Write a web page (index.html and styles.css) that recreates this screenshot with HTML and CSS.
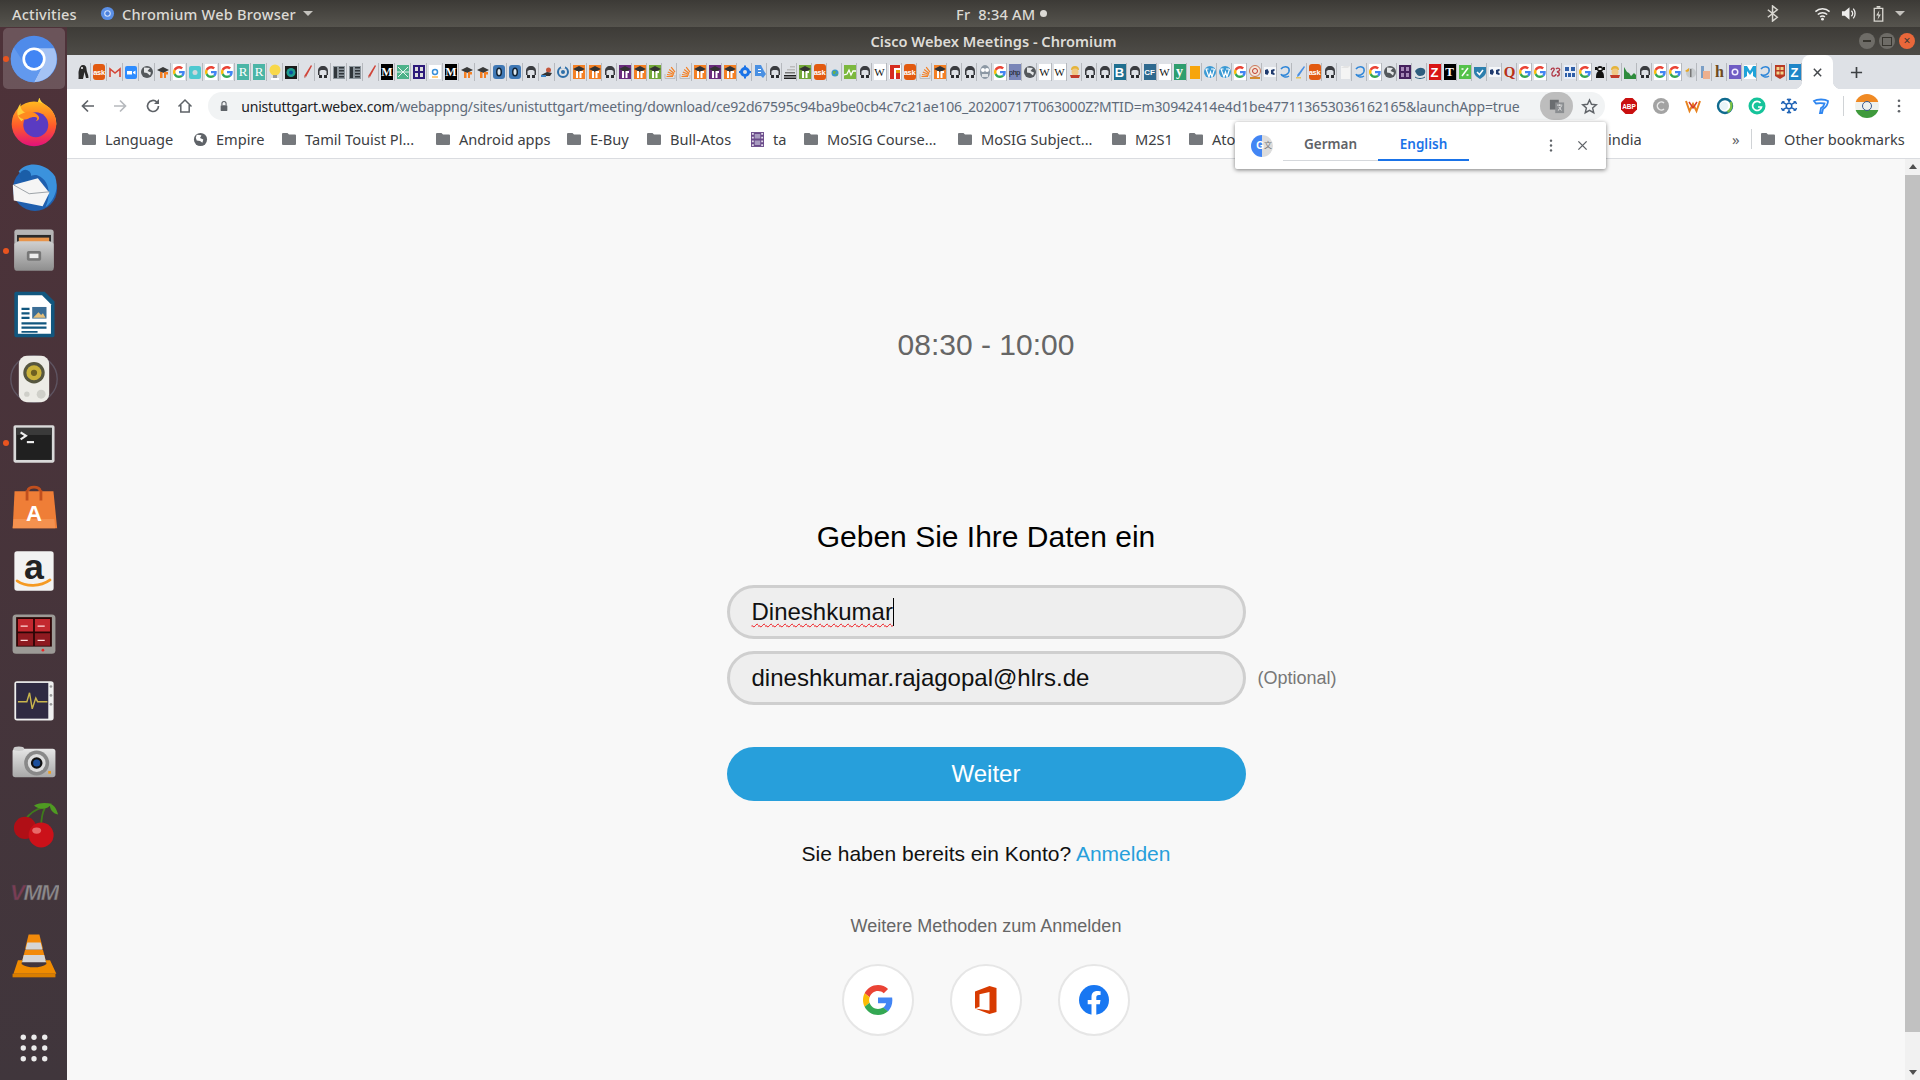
FILE: index.html
```html
<!DOCTYPE html>
<html lang="de">
<head>
<meta charset="utf-8">
<title>Cisco Webex Meetings - Chromium</title>
<link rel="stylesheet" href="styles.css">
</head>
<body>
<svg class="defs" aria-hidden="true">
  <symbol id="g" viewBox="0 0 48 48">
    <path fill="#EA4335" d="M24 9.5c3.54 0 6.71 1.22 9.21 3.6l6.85-6.85C35.9 2.38 30.47 0 24 0 14.62 0 6.51 5.38 2.56 13.22l7.98 6.19C12.43 13.72 17.74 9.5 24 9.5z"/>
    <path fill="#4285F4" d="M46.98 24.55c0-1.57-.15-3.09-.38-4.55H24v9.02h12.94c-.58 2.96-2.26 5.48-4.78 7.18l7.73 6c4.51-4.18 7.09-10.36 7.09-17.65z"/>
    <path fill="#FBBC05" d="M10.53 28.59c-.48-1.45-.76-2.99-.76-4.59s.27-3.14.76-4.59l-7.98-6.19C.92 16.46 0 20.12 0 24c0 3.88.92 7.54 2.56 10.78l7.97-6.19z"/>
    <path fill="#34A853" d="M24 48c6.48 0 11.93-2.13 15.89-5.81l-7.73-6c-2.15 1.45-4.92 2.3-8.16 2.3-6.26 0-11.57-4.22-13.47-9.91l-7.98 6.19C6.51 42.62 14.62 48 24 48z"/>
  </symbol>
  <symbol id="ghost" viewBox="0 0 12 16"><path fill="#3a3c40" d="M1 7c0-3 2-5 5-5s5 2 5 5v4h-1.500V7.500c0-1-1-1.500-3.500-1.500s-3.500.5-3.500 1.500V11H1z"/><path fill="#2b2d30" d="M2 11h3v3H2zM7 11h3v3H7z"/></symbol>
  <symbol id="peng" viewBox="0 0 12 16"><path fill="#2a2a2a" d="M6 1c2.500 0 3.500 2 3.500 4 0 3 2 5 2 9H9L7.500 8 6 15H1.500C2 10 1 9 2 6 2.500 3 4 1 6 1z"/><circle cx="5" cy="4" r="1" fill="#fff"/></symbol>
  <symbol id="gm" viewBox="0 0 12 16"><path fill="#e3e3e3" d="M0 4h12v9H0z"/><path fill="none" stroke="#d44638" stroke-width="1.600" d="M1 13V5l5 4 5-4v8"/></symbol>
  <symbol id="zm" viewBox="0 0 12 16"><rect y="2" width="12" height="13" rx="2" fill="#2d8cff"/><path fill="#fff" d="M2 7h5v3.500H2zM8 8l2.500-1.500v4L8 9z"/></symbol>
  <symbol id="d3" viewBox="0 0 12 16"><circle cx="6" cy="8" r="6" fill="#54585c"/><path fill="#e4e6e8" d="M3 3.500l6 .5-2.500 3 3.500 1.500-1 3-3-2.500-3-.5z"/></symbol>
  <symbol id="hat" viewBox="0 0 12 16"><path fill="#3a3a3a" d="M0 6l6-3 6 3-6 3z"/><path fill="#f48024" d="M3 8h2.500v6H3zM7 8h4v2.500H9V14H7z"/></symbol>
  <symbol id="box" viewBox="0 0 12 16"><rect y="1" width="12" height="14" fill="currentColor"/><path fill="#333" d="M0 5l6-3 6 3-6 3z"/><path fill="#fff" d="M3 7h2v7H3zM6.500 7h3.500v2H8.500v5h-2z"/></symbol>
  <symbol id="teal" viewBox="0 0 12 16"><rect y="2" width="12" height="13" rx="2" fill="#4ec9d0"/><circle cx="6" cy="8.500" r="2.500" fill="#cfd8dc"/></symbol>
  <symbol id="bulb" viewBox="0 0 12 16"><circle cx="6" cy="6" r="5.500" fill="#f8d84a"/><path fill="#999" d="M4 11h4v3H4z"/><path fill="#fff" d="M2 14h8v2H2z"/></symbol>
  <symbol id="eye" viewBox="0 0 12 16"><rect y="2" width="12" height="13" fill="#1b1b1b"/><circle cx="6" cy="8.500" r="4.500" fill="#1e9c8e"/><circle cx="6" cy="8.500" r="2" fill="#0a4fa0"/></symbol>
  <symbol id="pen" viewBox="0 0 12 16"><path fill="#d0453a" d="M10 1l1 1-6 11-2 1 .5-2.500z"/><path fill="#bbb" d="M4 12l1 1-2 1.500z"/></symbol>
  <symbol id="bpen" viewBox="0 0 12 16"><path fill="#4a90e2" d="M10 2l1 1-6 9-2 1 .5-2.500z"/><path fill="#e6c35c" d="M2 13h5v1.500H2z"/></symbol>
  <symbol id="grid" viewBox="0 0 12 16"><rect x="0" y="2" width="12" height="13" fill="#8e979e"/><path fill="#30363b" d="M6 3h5v1.500H6zM6 6h5v1.500H6zM6 9h5v1.500H6zM6 12h5v1.500H6zM1 3h3v11H1z"/></symbol>
  <symbol id="gx" viewBox="0 0 12 16"><rect y="1" width="12" height="14" fill="#4db28a"/><path fill="none" stroke="#e8f5ef" d="M1 3l10 10M11 3L1 13M0 8h12"/></symbol>
  <symbol id="d2" viewBox="0 0 12 16"><rect y="1" width="12" height="14" fill="#2d1a7b"/><path fill="#ddd" d="M2 3h3v4H2zM7 3h3v4H7zM2 9h3v4H2zM7 9h3v4H7z"/></symbol>
  <symbol id="amz" viewBox="0 0 12 16"><rect y="1" width="12" height="14" fill="#fff"/><circle cx="6" cy="8" r="2.500" fill="none" stroke="#3a8fd8" stroke-width="1.500"/><path stroke="#f90" fill="none" d="M3 13h6"/></symbol>
  <symbol id="bz" viewBox="0 0 12 16"><rect y="1" width="12" height="14" rx="3" fill="#3f78b5"/><ellipse cx="6" cy="8" rx="3" ry="4.500" fill="#123"/><ellipse cx="6" cy="8" rx="1.500" ry="3" fill="#dfe8ee"/></symbol>
  <symbol id="pers" viewBox="0 0 12 16"><circle cx="7.500" cy="6" r="2.500" fill="#c4553b"/><path fill="#333" d="M0 11l6-3 5 1-2 3H1z"/><path fill="#3a82c4" d="M0 11h5v2H0z"/></symbol>
  <symbol id="ring" viewBox="0 0 12 16"><circle cx="6" cy="8" r="5" fill="none" stroke="#2f6fa8" stroke-width="2"/><circle cx="6" cy="8" r="2" fill="#2f6fa8"/><path fill="#dee1e6" d="M4 1h4v3H4z"/></symbol>
  <symbol id="so" viewBox="0 0 12 16"><path fill="none" stroke="#f48024" stroke-width="1.200" d="M2.500 12.500h6.500M3 10.500l6.500 1M3.800 8l6 2.500M5.200 5.500l5 4M7.200 3.200l3.800 5"/><path fill="none" stroke="#bdbdbd" d="M1 10v4.500h10V11"/></symbol>
  <symbol id="gear" viewBox="0 0 12 16"><circle cx="6" cy="8" r="3.500" fill="none" stroke="#1a73e8" stroke-width="3"/><path stroke="#1a73e8" stroke-width="2" d="M6 1.500v2M6 12.500v2M0 8h2M10 8h2"/></symbol>
  <symbol id="bs" viewBox="0 0 12 16"><path fill="#4a90e2" d="M1 1h6l3 6 2 3-3 4-2-2H1z"/><path fill="#fff" d="M4 5h3v1H4zM4 8h3v1H4z"/></symbol>
  <symbol id="lines" viewBox="0 0 12 16"><path fill="#bbb" d="M6 2h5v1.500H6zM3 5h8v1.500H3z"/><path fill="#777" d="M1 8h10v1.500H1z"/><path fill="#222" d="M0 11h12v1.500H0zM0 13.500h12V15H0z"/></symbol>
  <symbol id="globe" viewBox="0 0 12 16"><circle cx="6" cy="9" r="3.500" fill="#3a98c8"/><path fill="#6ab04c" d="M4 7h3l-1 3H4zM7 10h2l-1 2z"/></symbol>
  <symbol id="wave" viewBox="0 0 12 16"><rect y="1" width="12" height="14" fill="#7cb83e"/><path fill="none" stroke="#fff" stroke-width="1.300" d="M0 11l3-1 2-4 2 5 2-4h3"/></symbol>
  <symbol id="red" viewBox="0 0 12 16"><rect y="1" width="12" height="14" fill="#fff"/><path fill="#d62d20" d="M1 1h10v3H1zM1 4h4v11H1z"/><path fill="#e3a008" d="M7 6h4v3H7z"/><path fill="#d62d20" d="M7 9h4v6H7z"/></symbol>
  <symbol id="owl" viewBox="0 0 12 16"><ellipse cx="6" cy="8" rx="5" ry="7" fill="#8c98a4"/><circle cx="4" cy="6" r="2" fill="#fff"/><circle cx="8" cy="6" r="2" fill="#fff"/><path fill="#dfe3e6" d="M3 10h6v3H3z"/></symbol>
  <symbol id="face" viewBox="0 0 12 16"><path fill="#e5b43a" d="M2 6a4 4 0 0 1 8 0z"/><circle cx="6" cy="8" r="3.500" fill="#f0c886"/><path fill="#c23a2a" d="M1 11h10l-1 3H2z"/></symbol>
  <symbol id="yb" viewBox="0 0 12 16"><rect x="1" y="2" width="10" height="13" fill="#f7a50d"/></symbol>
  <symbol id="wp" viewBox="0 0 12 16"><circle cx="6" cy="8" r="6" fill="#3b9ad4"/><path fill="none" stroke="#fff" stroke-width="1.200" d="M2 5l3 8 1.500-5L8 13l2.500-8M1.500 5h3M7 5h3"/></symbol>
  <symbol id="seal" viewBox="0 0 12 16"><circle cx="6" cy="7" r="5.500" fill="#f3e5d8" stroke="#c9785a"/><circle cx="6" cy="7" r="2.500" fill="none" stroke="#c0392b"/><path fill="#d38a2d" d="M1 13h10v2H1z"/></symbol>
  <symbol id="oc" viewBox="0 0 12 16"><rect y="3" width="12" height="10" fill="#f5f7fa"/><path fill="#1f3a6e" d="M1 6l2.500-1L5 8l-1.500 3L1 10zM7 6l3-1 1 1-2 2 2 2-1 1-3-1z"/></symbol>
  <symbol id="sw" viewBox="0 0 12 16"><path fill="none" stroke="#2f86d8" stroke-width="1.500" d="M2 5c2-3 7-3 8 0 1 4-3 7-7 6M10 12c-3 2-7 1-8-2"/></symbol>
  <symbol id="wh" viewBox="0 0 12 16"><rect x="2" y="2" width="9" height="13" fill="#f4f4f4"/><path fill="#e4e4e4" d="M2 4l3-2h6l-2 2z"/></symbol>
  <symbol id="code" viewBox="0 0 12 16"><rect y="1" width="12" height="14" fill="#46215e"/><path fill="#a78ab8" d="M2 3h3v4H2zM7 3h3v4H7zM2 9h3v4H2zM7 9h3v4H7z"/></symbol>
  <symbol id="whale" viewBox="0 0 12 16"><circle cx="6" cy="8" r="6" fill="#dfe3e8"/><path fill="#2f5d7e" d="M1 7c3-4 8-4 10-1 1 3-1 6-5 6-2 0-4-2-5-5z"/><path fill="none" stroke="#2f5d7e" d="M1 13c3 2 7 2 10 0"/></symbol>
  <symbol id="pct" viewBox="0 0 12 16"><rect y="1" width="12" height="14" fill="#55c24a"/><path fill="none" stroke="#fff" stroke-width="1.500" d="M3 12l6-8M2.500 5h2M7.500 11h2"/></symbol>
  <symbol id="shield" viewBox="0 0 12 16"><path fill="#2c7fae" d="M0 3h12v5c0 3-3 5-6 7-3-2-6-4-6-7z"/><path fill="none" stroke="#fff" stroke-width="1.500" d="M3 8l2.500 2.500L9 6"/></symbol>
  <symbol id="curl" viewBox="0 0 12 16"><path fill="none" stroke="#b03a48" stroke-width="1.400" d="M2 6c1-3 4-2 3 0S2 9 3 11s4 1 4-1M7 5c2-2 5 0 3 2l-2 1c3 0 3 4 0 4"/></symbol>
  <symbol id="btxt" viewBox="0 0 12 16"><rect y="1" width="12" height="14" fill="#e8eef8"/><path fill="#2f5fa8" d="M1 3h4v4H1zM7 3h4v4H7zM1 9h2v4H1zM4 9h3v4H4zM8 9h3v4H8z"/></symbol>
  <symbol id="blk" viewBox="0 0 12 16"><circle cx="6" cy="5" r="3" fill="#111"/><path fill="#111" d="M2 14c0-5 1-7 4-7s4 2 4 7z"/><path fill="#eee" d="M4.500 4h3v2h-3z"/><path fill="#111" d="M1 3h2v3H1zM9 3h2v3H9z"/></symbol>
  <symbol id="mtn" viewBox="0 0 12 16"><path fill="#2e8b3d" d="M0 15V3l3 5 2 1 2 3 3-3 2 2v4z"/></symbol>
  <symbol id="kk" viewBox="0 0 12 16"><circle cx="7" cy="9" r="5" fill="#c6cacd"/><path fill="#e9a826" d="M1 7l4-3v3l-2 1z"/><path fill="#777" d="M6 5h1.500v8H6z"/></symbol>
  <symbol id="hh" viewBox="0 0 12 16"><path fill="#7b9fc6" d="M2 2h3v12H2z"/><path fill="#eeb08e" d="M4 7h7v8H4z"/></symbol>
  <symbol id="pc" viewBox="0 0 12 16"><rect y="1" width="12" height="14" fill="#6f5cc4"/><circle cx="6" cy="8" r="3.500" fill="#f1edff"/><circle cx="6" cy="8" r="2" fill="#6f5cc4"/></symbol>
  <symbol id="mm" viewBox="0 0 12 16"><rect y="1" width="12" height="14" fill="#fff"/><path fill="#1fa3d9" d="M0 2l3 0 3 5 3-5h3v12l-3-2V7l-3 4-3-4v5l-3 2z"/></symbol>
  <symbol id="rs" viewBox="0 0 12 16"><path fill="#b83a24" d="M1 1h10v11l-5 3-5-3z"/><path fill="#f1d48a" d="M2.500 3h3v3h-3zM6.500 3h3v3h-3zM2.500 7.500h3v3h-3zM6.500 7.500h3v3h-3z"/></symbol>
  <symbol id="fld" viewBox="0 0 14 12"><path fill="#75787c" d="M1 0h4.500l1.500 1.500h6a1 1 0 0 1 1 1V11a1 1 0 0 1-1 1H1a1 1 0 0 1-1-1V1a1 1 0 0 1 1-1z"/></symbol>
</svg>

<header class="topbar">
  <span class="tb-activities">Activities</span>
  <span class="tb-app">
    <svg class="tb-appicon" viewBox="0 0 16 16"><circle cx="8" cy="8" r="7" fill="#5a8fe6"/><circle cx="8" cy="8" r="3.500" fill="#cfe0fb"/><circle cx="8" cy="8" r="2.300" fill="#4a80dd"/></svg>
    Chromium Web Browser
    <i class="caret"></i>
  </span>
  <span class="tb-clock">Fr&nbsp; 8:34 AM<i class="clockdot"></i></span>
  <span class="tb-tray">
    <svg class="tray-bt" viewBox="0 0 18 18"><path fill="none" stroke="#d8d6d0" stroke-width="1.600" d="M3 5l10 8-5 4V1l5 4L3 13"/></svg>
    <svg class="tray-wifi" viewBox="0 0 18 18"><path fill="none" stroke="#eeedeb" stroke-width="1.600" d="M1.500 7a11 11 0 0 1 15 0M4 10a7.500 7.500 0 0 1 10 0M6.500 12.800a3.500 3.500 0 0 1 5 0"/><circle cx="9" cy="15" r="1.500" fill="#eeedeb"/></svg>
    <svg class="tray-vol" viewBox="0 0 18 18"><path fill="#eeedeb" d="M1 6.500h3L9 2.500v13l-5-4H1z"/><path fill="none" stroke="#eeedeb" stroke-width="1.400" d="M11 6a4 4 0 0 1 0 6M13 3.800a8 8 0 0 1 0 10.400"/></svg>
    <svg class="tray-bat" viewBox="0 0 18 18"><path fill="none" stroke="#d8d6d0" stroke-width="1.400" d="M4.500 3.500h9v13.500h-9z"/><path fill="#d8d6d0" d="M7 1h4v2H7zM10 5.500L6.500 11H9l-1 4.500L11.500 10H9z"/></svg>
    <i class="caret caret-tray"></i>
  </span>
</header>

<div class="desk">
  <nav class="dock">
    <div class="dk dk-active"><i class="run"></i>
      <svg viewBox="0 0 56 56"><circle cx="28" cy="28" r="26" fill="#4f8bea"/><path fill="#a4c2f4" d="M28 16H50.500A26 26 0 0 1 28 54L38.400 34A12 12 0 0 0 28 16Z"/><path fill="#6299ee" d="M38.400 34L28 54A26 26 0 0 1 5.500 15L17.600 34A12 12 0 0 0 38.400 34Z"/><circle cx="28" cy="28" r="13" fill="#fff"/><circle cx="28" cy="28" r="10" fill="#4285f4"/></svg></div>
    <div class="dk">
      <svg viewBox="0 2 56 56"><defs><linearGradient id="ff" x1="0" y1="0" x2="0" y2="1"><stop offset="0" stop-color="#ffb81f"/><stop offset=".55" stop-color="#ff5a2a"/><stop offset="1" stop-color="#e3107c"/></linearGradient></defs><path fill="#ffd93b" d="M34 1c1 7 8 8 13 14 5 6 6 12 6 17L40 20 30 14z"/><circle cx="28" cy="31" r="25" fill="url(#ff)"/><path fill="#ffcf3a" d="M13 8c-1 7 3 10 9 12l-8 8C9 24 7 16 13 8z"/><circle cx="30" cy="32" r="14" fill="#5a3bc2"/><path fill="#ff8a1f" d="M10 22c7-5 16-7 22-1 3 3 2 6-2 7 5-5-3-6-8-3-4 2-8 1-12-3z"/></svg></div>
    <div class="dk">
      <svg viewBox="2 3 52 52"><circle cx="29" cy="31" r="23" fill="#1f5fae"/><path fill="#3b92dd" d="M12 13C20 2 40 3 50 18 54 30 50 42 40 50 46 36 44 22 32 17 26 15 22 19 20 23z"/><circle cx="19" cy="17" r="6" fill="#1a5ea8"/><path fill="#f5f5f5" d="M6 27l26-7 12 15-7 14-30-6z"/><path fill="none" stroke="#9aa0a6" d="M7 27l16 9 21-2"/></svg></div>
    <div class="dk"><i class="run"></i>
      <svg viewBox="0 0 56 56"><defs><linearGradient id="cab" x1="0" y1="0" x2="0" y2="1"><stop offset="0" stop-color="#d0d0d0"/><stop offset="1" stop-color="#8e8e8e"/></linearGradient></defs><rect x="6" y="4" width="44" height="44" rx="3" fill="#b5b5b5"/><rect x="9" y="10" width="38" height="11" fill="#2a2a2a"/><rect x="11" y="13" width="34" height="5" fill="#e8944a"/><path fill="url(#cab)" d="M6 20l4-3h36l4 3v28a2 2 0 0 1-2 2H8a2 2 0 0 1-2-2z"/><rect x="20" y="28" width="16" height="11" rx="2" fill="#777"/><rect x="23" y="31" width="10" height="5" fill="#eee"/></svg></div>
    <div class="dk">
      <svg viewBox="0 0 56 56"><path fill="#12577f" d="M8 2h32l11 11v38a2 2 0 0 1-2 2H8a2 2 0 0 1-2-2V4a2 2 0 0 1 2-2z"/><path fill="#fff" d="M10 6h27l10 10v33H10z"/><path fill="#12577f" d="M14 20h9v2.500h-9zM14 25h9v2.500h-9zM14 30h9v2.500h-9zM14 36h28v2.500H14zM14 41h28v2.500H14zM14 46h18v2H14z"/><rect x="26" y="19" width="16" height="13" fill="#3c6e96"/><path fill="#e5c07b" d="M27 31l6-6 3 3 2-2 3 5z"/></svg></div>
    <div class="dk">
      <svg viewBox="0 0 56 56"><circle cx="28" cy="28" r="26" fill="none" stroke="#5e5461" stroke-width="1.500"/><rect x="11" y="2" width="34" height="52" rx="9" fill="#ecebe6"/><circle cx="28" cy="21" r="12" fill="#56563f"/><circle cx="28" cy="21" r="8.500" fill="#c9b13a"/><circle cx="28" cy="21" r="3.500" fill="#6d6022"/><circle cx="36" cy="45" r="5" fill="#cfcfc9"/><circle cx="20" cy="45" r="3" fill="#cfcfc9"/></svg></div>
    <div class="dk"><i class="run"></i>
      <svg viewBox="0 -1 56 56"><rect x="5" y="7" width="46" height="42" rx="2" fill="#d9d9d9"/><rect x="8" y="10" width="40" height="36" fill="#202020"/><rect x="8" y="10" width="40" height="8" fill="#3a3a3a"/><path fill="none" stroke="#f0f0f0" stroke-width="2.400" d="M13 15l6 4-6 4"/><path stroke="#f0f0f0" stroke-width="2.400" d="M20 26h8"/></svg></div>
    <div class="dk">
      <svg viewBox="1 1 54 54"><path fill="#c14f1e" d="M20 12v-2a8 5 0 0 1 16 0v2h-3V11a5 3 0 0 0-10 0v1z"/><path fill="#ef7e37" d="M7 12h42l4 40H5z" transform="translate(0 -1)"/><path fill="#f4914f" d="M6 41h44l1 10H5z"/><path fill="#c14f1e" d="M19 10h3v11h-3zM34 10h3v11h-3z"/><text class="bagA" x="28" y="43">A</text></svg></div>
    <div class="dk">
      <svg viewBox="0 0 56 56"><rect x="6" y="6" width="44" height="44" rx="3" fill="#f2f2f2"/><text class="amzA" x="28" y="37">a</text><path fill="none" stroke="#f59a23" stroke-width="3" stroke-linecap="round" d="M9 39c10 7 26 7 37-1"/></svg></div>
    <div class="dk">
      <svg viewBox="0 0 56 56"><rect x="4" y="5" width="48" height="44" rx="4" fill="#9c9a96"/><rect x="8" y="8" width="40" height="33" fill="#2a0606"/><path fill="#c3282f" d="M10 10h17v14H10zM29 10h17v14H29z"/><path fill="#8e1a20" d="M10 26h17v14H10zM29 26h17v14H29z"/><path stroke="#ffdada" stroke-width="1.500" d="M13 18h8M32 18h8M13 34h8M32 34h8"/><circle cx="38" cy="45" r="1.500" fill="#e22"/></svg></div>
    <div class="dk">
      <svg viewBox="0 -2 56 56"><rect x="6" y="6" width="44" height="44" rx="3" fill="#efefef"/><rect x="8" y="8" width="36" height="40" fill="#2f2a42"/><path fill="none" stroke="#c9b54d" stroke-width="1.600" d="M10 29h10l3-10 3 18 4-12 2 4h11"/><circle cx="47" cy="12" r="1.500" fill="#999"/><circle cx="47" cy="22" r="1.500" fill="#999"/><circle cx="47" cy="32" r="1.500" fill="#999"/></svg></div>
    <div class="dk">
      <svg viewBox="0 -1 56 56"><defs><linearGradient id="cam" x1="0" y1="0" x2="0" y2="1"><stop offset="0" stop-color="#e6e6e6"/><stop offset="1" stop-color="#a8a8a8"/></linearGradient></defs><rect x="4" y="11" width="48" height="32" rx="3" fill="url(#cam)"/><ellipse cx="11" cy="11" rx="6" ry="2.500" fill="#ccc"/><circle cx="31" cy="27" r="14" fill="#888"/><circle cx="31" cy="27" r="10" fill="#ddd"/><circle cx="31" cy="27" r="6.500" fill="#111"/><circle cx="31" cy="27" r="4" fill="#1b4e9b"/><rect x="44" y="36" width="3" height="3" fill="#f0a020"/></svg></div>
    <div class="dk">
      <svg viewBox="0 0 56 56"><path fill="none" stroke="#3f7a1c" stroke-width="2" d="M18 20c5-7 12-12 20-14M36 28c0-8 1-15 4-21"/><path fill="#4f9a22" d="M28 4c7-4 14-3 20-2-4 6-13 8-20 2zM46 2c4 1 7 5 9 12-6-1-10-6-9-12z"/><circle cx="18" cy="29" r="12.500" fill="#b00f16"/><circle cx="36" cy="37" r="14" fill="#cb1119"/><ellipse cx="31" cy="32" rx="5" ry="3.500" fill="#e86a6a"/></svg></div>
    <div class="dk">
      <svg viewBox="0 -3 56 56"><text class="vmm" x="28" y="35"><tspan class="vmm-v">V</tspan>MM</text></svg></div>
    <div class="dk">
      <svg viewBox="0 -2 56 56"><path fill="#f28a0a" d="M22 3h12l4 16H18z"/><path fill="#d5d5d5" d="M20.500 12h15l2 8h-19z"/><path fill="#f28a0a" d="M18 20h20l3 12H15z"/><path fill="#d5d5d5" d="M16.500 26h23l2 8h-27z"/><path fill="#f08c00" d="M10 32h5l-1 4c6 5 22 5 28 0l-1-4h5l7 15H5z"/><rect x="4" y="47" width="48" height="4" fill="#d97e00"/></svg></div>
    <div class="dk dk-apps">
      <svg viewBox="0 0 56 56"><g fill="#ececec"><circle cx="16" cy="16" r="3"/><circle cx="28" cy="16" r="3"/><circle cx="40" cy="16" r="3"/><circle cx="16" cy="28" r="3"/><circle cx="28" cy="28" r="3"/><circle cx="40" cy="28" r="3"/><circle cx="16" cy="40" r="3"/><circle cx="28" cy="40" r="3"/><circle cx="40" cy="40" r="3"/></g></svg></div>
  </nav>

  <section class="window">
    <div class="titlebar">
      <span class="title">Cisco Webex Meetings - Chromium</span>
      <span class="winbtns">
        <i class="wb wb-min"></i><i class="wb wb-max"></i><i class="wb wb-close">×</i>
      </span>
    </div>

    <div class="tabstrip">
      <div class="tabs tabs-wide">
        <span class="t"><svg class="f"><use href="#peng"/></svg></span>
        <span class="t"><b class="f ask">ask</b></span>
        <span class="t"><svg class="f"><use href="#gm"/></svg></span>
        <span class="t"><svg class="f"><use href="#zm"/></svg></span>
        <span class="t"><svg class="f"><use href="#d3"/></svg></span>
        <span class="t"><svg class="f"><use href="#hat"/></svg></span>
        <span class="t"><svg class="f w"><use href="#g"/></svg></span>
        <span class="t"><svg class="f"><use href="#teal"/></svg></span>
        <span class="t"><svg class="f w"><use href="#g"/></svg></span>
        <span class="t"><svg class="f w"><use href="#g"/></svg></span>
        <span class="t"><b class="f rg">R</b></span>
        <span class="t"><b class="f rg">R</b></span>
        <span class="t"><svg class="f"><use href="#bulb"/></svg></span>
        <span class="t"><svg class="f"><use href="#eye"/></svg></span>
        <span class="t"><svg class="f"><use href="#pen"/></svg></span>
        <span class="t"><svg class="f"><use href="#ghost"/></svg></span>
        <span class="t"><svg class="f"><use href="#grid"/></svg></span>
        <span class="t"><svg class="f"><use href="#grid"/></svg></span>
        <span class="t"><svg class="f"><use href="#pen"/></svg></span>
        <span class="t"><b class="f mk">M</b></span>
        <span class="t"><svg class="f"><use href="#gx"/></svg></span>
        <span class="t"><svg class="f"><use href="#d2"/></svg></span>
        <span class="t"><svg class="f"><use href="#amz"/></svg></span>
        <span class="t"><b class="f mk">M</b></span>
        <span class="t"><svg class="f"><use href="#hat"/></svg></span>
        <span class="t"><svg class="f"><use href="#hat"/></svg></span>
        <span class="t"><svg class="f"><use href="#bz"/></svg></span>
        <span class="t"><svg class="f"><use href="#bz"/></svg></span>
        <span class="t"><svg class="f"><use href="#ghost"/></svg></span>
        <span class="t"><svg class="f"><use href="#pers"/></svg></span>
        <span class="t"><svg class="f"><use href="#ring"/></svg></span>
        <span class="t"><svg class="f or"><use href="#box"/></svg></span>
      </div>
      <div class="tabs tabs-narrow">
        <span class="t"><svg class="f or"><use href="#box"/></svg></span>
        <span class="t"><svg class="f"><use href="#ghost"/></svg></span>
        <span class="t"><svg class="f pu"><use href="#box"/></svg></span>
        <span class="t"><svg class="f or"><use href="#box"/></svg></span>
        <span class="t"><svg class="f gr"><use href="#box"/></svg></span>
        <span class="t"><svg class="f"><use href="#so"/></svg></span>
        <span class="t"><svg class="f"><use href="#so"/></svg></span>
        <span class="t"><svg class="f or"><use href="#box"/></svg></span>
        <span class="t"><svg class="f pu"><use href="#box"/></svg></span>
        <span class="t"><svg class="f or"><use href="#box"/></svg></span>
        <span class="t"><svg class="f"><use href="#gear"/></svg></span>
        <span class="t"><svg class="f"><use href="#bs"/></svg></span>
        <span class="t"><svg class="f"><use href="#ghost"/></svg></span>
        <span class="t"><svg class="f"><use href="#lines"/></svg></span>
        <span class="t"><svg class="f gr"><use href="#box"/></svg></span>
        <span class="t"><b class="f ask">ask</b></span>
        <span class="t"><svg class="f"><use href="#globe"/></svg></span>
        <span class="t"><svg class="f"><use href="#wave"/></svg></span>
        <span class="t"><svg class="f"><use href="#ghost"/></svg></span>
        <span class="t"><b class="f wk">W</b></span>
        <span class="t"><svg class="f"><use href="#red"/></svg></span>
        <span class="t"><b class="f ask">ask</b></span>
        <span class="t"><svg class="f"><use href="#so"/></svg></span>
        <span class="t"><svg class="f or"><use href="#box"/></svg></span>
        <span class="t"><svg class="f"><use href="#ghost"/></svg></span>
        <span class="t"><svg class="f"><use href="#ghost"/></svg></span>
        <span class="t"><svg class="f"><use href="#owl"/></svg></span>
        <span class="t"><svg class="f w"><use href="#g"/></svg></span>
        <span class="t"><b class="f php">php</b></span>
        <span class="t"><svg class="f"><use href="#d3"/></svg></span>
        <span class="t"><b class="f wk">W</b></span>
        <span class="t"><b class="f wk">W</b></span>
        <span class="t"><svg class="f"><use href="#face"/></svg></span>
        <span class="t"><svg class="f"><use href="#ghost"/></svg></span>
        <span class="t"><svg class="f"><use href="#ghost"/></svg></span>
        <span class="t"><b class="f bt">B</b></span>
        <span class="t"><svg class="f"><use href="#ghost"/></svg></span>
        <span class="t"><b class="f cf">CF</b></span>
        <span class="t"><b class="f wk">W</b></span>
        <span class="t"><b class="f yg">y</b></span>
        <span class="t"><svg class="f"><use href="#yb"/></svg></span>
        <span class="t"><svg class="f"><use href="#wp"/></svg></span>
        <span class="t"><svg class="f"><use href="#wp"/></svg></span>
        <span class="t"><svg class="f w"><use href="#g"/></svg></span>
        <span class="t"><svg class="f"><use href="#seal"/></svg></span>
        <span class="t"><svg class="f"><use href="#oc"/></svg></span>
        <span class="t"><svg class="f"><use href="#sw"/></svg></span>
        <span class="t"><svg class="f"><use href="#bpen"/></svg></span>
        <span class="t"><b class="f ask">ask</b></span>
        <span class="t"><svg class="f"><use href="#ghost"/></svg></span>
        <span class="t"><svg class="f"><use href="#wh"/></svg></span>
        <span class="t"><svg class="f"><use href="#sw"/></svg></span>
        <span class="t"><svg class="f w"><use href="#g"/></svg></span>
        <span class="t"><svg class="f"><use href="#d3"/></svg></span>
        <span class="t"><svg class="f"><use href="#code"/></svg></span>
        <span class="t"><svg class="f"><use href="#whale"/></svg></span>
        <span class="t"><b class="f zr">Z</b></span>
        <span class="t"><b class="f tk">T</b></span>
        <span class="t"><svg class="f"><use href="#pct"/></svg></span>
        <span class="t"><svg class="f"><use href="#shield"/></svg></span>
        <span class="t"><svg class="f"><use href="#oc"/></svg></span>
        <span class="t"><b class="f qr">Q</b></span>
        <span class="t"><svg class="f w"><use href="#g"/></svg></span>
        <span class="t"><svg class="f w"><use href="#g"/></svg></span>
        <span class="t"><svg class="f"><use href="#curl"/></svg></span>
        <span class="t"><svg class="f"><use href="#btxt"/></svg></span>
        <span class="t"><svg class="f w"><use href="#g"/></svg></span>
        <span class="t"><svg class="f"><use href="#blk"/></svg></span>
        <span class="t"><svg class="f"><use href="#face"/></svg></span>
        <span class="t"><svg class="f"><use href="#mtn"/></svg></span>
        <span class="t"><svg class="f"><use href="#ghost"/></svg></span>
        <span class="t"><svg class="f w"><use href="#g"/></svg></span>
        <span class="t"><svg class="f w"><use href="#g"/></svg></span>
        <span class="t"><svg class="f"><use href="#kk"/></svg></span>
        <span class="t"><svg class="f"><use href="#hh"/></svg></span>
        <span class="t"><b class="f hb">h</b></span>
        <span class="t"><svg class="f"><use href="#pc"/></svg></span>
        <span class="t"><svg class="f"><use href="#mm"/></svg></span>
        <span class="t"><svg class="f"><use href="#sw"/></svg></span>
        <span class="t"><svg class="f"><use href="#rs"/></svg></span>
        <span class="t"><b class="f zb">Z</b></span>
      </div>
      <div class="tab-active"><svg viewBox="0 0 12 12"><path stroke="#45484c" stroke-width="1.600" d="M2 2l8 8M10 2l-8 8"/></svg></div>
      <svg class="newtab" viewBox="0 0 14 14"><path stroke="#3c4043" stroke-width="1.800" d="M7 1v12M1 7h12"/></svg>
    </div>

    <div class="toolbar">
      <span class="nav"><svg viewBox="0 0 16 16"><path fill="none" stroke="#5f6368" stroke-width="1.700" d="M14 8H2.500M8 2.500L2.500 8 8 13.500"/></svg></span>
      <span class="nav"><svg viewBox="0 0 16 16"><path fill="none" stroke="#b6b9bd" stroke-width="1.700" d="M2 8h11.500M8 2.500L13.500 8 8 13.500"/></svg></span>
      <span class="nav"><svg viewBox="0 0 16 16"><path fill="none" stroke="#5f6368" stroke-width="1.700" d="M13.500 8a5.500 5.500 0 1 1-1.700-4"/><path fill="#5f6368" d="M14 1v5H9z"/></svg></span>
      <span class="nav"><svg viewBox="0 0 16 16"><path fill="none" stroke="#5f6368" stroke-width="1.500" d="M1.500 8.500L8 2l6.500 6.500M3.800 7v7h8.400V7"/></svg></span>
      <div class="omni">
        <svg class="lock" viewBox="0 0 12 14"><path fill="none" stroke="#5f6368" stroke-width="1.300" d="M3.500 6V4a2.500 2.500 0 0 1 5 0v2"/><rect x="2" y="6" width="8" height="7" rx="1" fill="#5f6368"/></svg>
        <span class="url"><span class="host">unistuttgart.webex.com</span>/webappng/sites/unistuttgart/meeting/download/ce92d67595c94ba9be0cb4c7c21ae106_20200717T063000Z?MTID=m30942414e4d1be477113653036162165&amp;launchApp=true</span>
        <span class="omni-tr"><svg viewBox="0 0 18 18"><path fill="#6a6d70" d="M1 2h10v11H1z"/><path fill="#8b8e91" d="M7 5h10v12H7z"/><path fill="none" stroke="#e6e6e6" d="M9 8h6M12 7v2M10 14c2-1 3-3 4-5M11 10l3 4"/></svg></span>
        <svg class="star" viewBox="0 0 18 18"><path fill="none" stroke="#5f6368" stroke-width="1.500" d="M9 2l2.100 4.700 5.100.5-3.900 3.400 1.200 5L9 13l-4.500 2.600 1.200-5-3.900-3.400 5.100-.5z"/></svg>
      </div>
      <div class="exts">
        <span class="ext"><svg viewBox="0 0 18 18"><path fill="#c90f0f" d="M5.500 1h7L17 5.500v7L12.500 17h-7L1 12.500v-7z"/><text class="abp" x="9" y="11.800">ABP</text></svg></span>
        <span class="ext"><svg viewBox="0 0 18 18"><circle cx="9" cy="9" r="8" fill="#a3a3a3"/><path fill="none" stroke="#e9e9e9" stroke-width="1.500" d="M12 6a4 4 0 1 0 0 6"/></svg></span>
        <span class="ext"><svg viewBox="0 0 18 18"><path fill="none" stroke="#e8831f" stroke-width="2" d="M2 4l3.500 10L9 7l3.500 7L16 4"/><path fill="none" stroke="#d63b2a" stroke-width="1.500" d="M5 5l4 6 4-6"/></svg></span>
        <span class="ext"><svg viewBox="0 0 18 18"><circle cx="9" cy="9" r="7" fill="none" stroke="#0f6a8e" stroke-width="2.400"/><path fill="none" stroke="#7cc242" stroke-width="2.400" d="M14.500 5a7 7 0 0 1-3 10"/><circle cx="8" cy="9" r="4" fill="#e8f4f8"/></svg></span>
        <span class="ext"><svg viewBox="0 0 18 18"><circle cx="9" cy="9" r="8.500" fill="#15c39a"/><path fill="none" stroke="#fff" stroke-width="1.700" d="M12.500 6a4.500 4.500 0 1 0 1 4H10"/></svg></span>
        <span class="ext"><svg viewBox="0 0 18 18"><g fill="none" stroke="#1a5fb4" stroke-width="1.500"><circle cx="9" cy="9" r="2.800"/><path d="M9 1.500v4M9 12.500v4M2.500 5.200l3.500 2M12 10.800l3.500 2M2.500 12.800l3.500-2M12 7.200l3.500-2"/><path d="M7 2l2 1.500L11 2M7 16l2-1.500 2 1.500M1.500 7l1 -2 2-.3M16.500 11l-1 2-2 .3M1.500 11l1 2 2 .3M16.500 7l-1-2-2-.3"/></g></svg></span>
        <span class="ext"><svg viewBox="0 0 18 18"><path fill="none" stroke="#2f86f0" stroke-width="1.800" d="M2 4c3-2 11-2 14 0 0 4-2 6-5 8l-1 4H8l1-5c2-1 3-2 3.500-4.500C10 6 7 6 4 6.500z"/></svg></span>
      </div>
      <i class="tool-sep"></i>
      <span class="avatar"><i class="chakra"></i></span>
      <svg class="kebab" viewBox="0 0 4 16"><g fill="#5f6368"><circle cx="2" cy="2" r="1.500"/><circle cx="2" cy="8" r="1.500"/><circle cx="2" cy="14" r="1.500"/></g></svg>
    </div>

    <div class="bookmarks">
      <span class="bm bm-lang"><svg class="folder"><use href="#fld"/></svg>Language</span>
      <span class="bm bm-emp"><svg class="bm-globe" viewBox="0 0 16 16"><circle cx="8" cy="8" r="7" fill="#5f6368"/><path fill="#fff" d="M4 3l5 .5-1.500 3L11 8l-1 3.500-2.500-2-3.500-.5L3 6z"/></svg>Empire</span>
      <span class="bm bm-tam"><svg class="folder"><use href="#fld"/></svg>Tamil Touist Pl...</span>
      <span class="bm bm-and"><svg class="folder"><use href="#fld"/></svg>Android apps</span>
      <span class="bm bm-ebuy"><svg class="folder"><use href="#fld"/></svg>E-Buy</span>
      <span class="bm bm-bull"><svg class="folder"><use href="#fld"/></svg>Bull-Atos</span>
      <span class="bm bm-ta"><svg class="film" viewBox="0 0 14 16"><rect width="14" height="16" fill="#6a4a8a"/><path fill="#e2dbe9" d="M1 1h2v2H1zM1 5h2v2H1zM1 9h2v2H1zM1 13h2v2H1zM11 1h2v2h-2zM11 5h2v2h-2zM11 9h2v2h-2zM11 13h2v2h-2z"/><path fill="#a79abf" d="M4 2h6v5H4zM4 9h6v5H4z"/></svg>ta</span>
      <span class="bm bm-mc"><svg class="folder"><use href="#fld"/></svg>MoSIG Course...</span>
      <span class="bm bm-ms"><svg class="folder"><use href="#fld"/></svg>MoSIG Subject...</span>
      <span class="bm bm-m2"><svg class="folder"><use href="#fld"/></svg>M2S1</span>
      <span class="bm bm-ato"><svg class="folder"><use href="#fld"/></svg>Atos</span>
      <span class="bm bm-india">india</span>
      <span class="bm-more">»</span>
      <i class="bm-sep"></i>
      <span class="bm bm-other"><svg class="folder"><use href="#fld"/></svg>Other bookmarks</span>
    </div>

    <div class="viewport">
      <main class="page">
        <div class="time">08:30 - 10:00</div>
        <h1 class="heading">Geben Sie Ihre Daten ein</h1>
        <div class="field field-first"><span class="typed">Dineshkumar</span><i class="textcaret"></i></div>
        <div class="row-opt">
          <div class="field">dineshkumar.rajagopal@hlrs.de</div>
          <span class="optional">(Optional)</span>
        </div>
        <button class="submit">Weiter</button>
        <p class="account">Sie haben bereits ein Konto? <a class="signin">Anmelden</a></p>
        <p class="more">Weitere Methoden zum Anmelden</p>
        <div class="socials">
          <span class="social"><svg viewBox="0 0 48 48"><use href="#g"/></svg></span>
          <span class="social"><svg viewBox="0 0 30 30"><path fill="#d83b01" d="M4 6.500L18.500 1 25.500 3v24l-7 2L4 23.500l14.500 2V7L8.500 9.300v12.400L4 23.500z"/></svg></span>
          <span class="social"><svg viewBox="0 0 30 30"><circle cx="15" cy="15" r="15" fill="#1877f2"/><path fill="#fff" d="M20.800 19.300l.7-4.300h-4.200v-2.800c0-1.200.6-2.300 2.400-2.300h1.900V6.200s-1.700-.3-3.400-.3c-3.400 0-5.700 2.100-5.700 5.800V15H8.700v4.300h3.800V30h4.800V19.300z"/></svg></span>
        </div>
      </main>
      <aside class="scrollbar"><i class="sb-up"></i><i class="sb-thumb"></i><i class="sb-down"></i></aside>
    </div>

    <div class="bubble">
      <span class="bb-logo"><b class="bb-g">G</b><b class="bb-wen">文</b></span>
      <span class="bb-tab">German</span>
      <span class="bb-tab bb-on">English</span>
      <svg class="bb-kebab" viewBox="0 0 4 16"><g fill="#5f6368"><circle cx="2" cy="2" r="1.500"/><circle cx="2" cy="8" r="1.500"/><circle cx="2" cy="14" r="1.500"/></g></svg>
      <svg class="bb-x" viewBox="0 0 12 12"><path stroke="#5f6368" stroke-width="1.500" d="M1.500 1.500l9 9M10.500 1.500l-9 9"/></svg>
    </div>
  </section>
</div>
</body>
</html>
```

FILE: styles.css
```css
* { box-sizing: border-box; }
html, body { margin: 0; padding: 0; }
body {
  width: 1920px;
  height: 1080px;
  overflow: hidden;
  display: flex;
  flex-direction: column;
  font-family: "Noto Sans", "Open Sans", sans-serif;
  background: #f8f8f8;
}
i, b { font-style: normal; }
.defs { position: absolute; width: 0; height: 0; }

/* GNOME top bar */
.topbar {
  height: 27px;
  flex: none;
  display: flex;
  align-items: center;
  position: relative;
  background: linear-gradient(#3c3a36, #56544e);
  color: #dcdad5;
  font-size: 14.600px;
  letter-spacing: .2px;
  font-weight: 500;
}
.tb-activities { margin-left: 12px; width: 88px; }
.tb-app { display: flex; align-items: center; gap: 7px; }
.tb-appicon { width: 15px; height: 15px; }
.caret {
  width: 0; height: 0;
  border-left: 5px solid transparent;
  border-right: 5px solid transparent;
  border-top: 5px solid #c4c2bd;
}
.tb-clock { position: absolute; left: 956px; display: flex; align-items: center; }
.clockdot { width: 7px; height: 7px; margin-left: 5px; border-radius: 50%; background: #dcdad5; }
.tb-tray { margin-left: auto; display: flex; align-items: center; height: 100%; }
.tb-tray svg { width: 17px; height: 17px; }
.tray-bt { margin-right: 32px; }
.tray-wifi { margin-right: 10px; }
.tray-vol { margin-right: 12px; }
.tray-bat { margin-right: 8px; }
.caret-tray { margin-right: 15px; }

.desk { flex: 1; display: flex; min-height: 0; }

/* Dock */
.dock {
  width: 67px;
  flex: none;
  display: flex;
  flex-direction: column;
  align-items: center;
  padding-top: 1px;
  background: linear-gradient(#4e3239, #40363c);
}
.dk {
  width: 62px;
  height: 64px;
  flex: none;
  display: flex;
  align-items: center;
  justify-content: center;
  position: relative;
}
.dk svg { width: 50px; height: 50px; }
.dk-active { background: rgba(255, 255, 255, .17); border-radius: 5px; height: 61px; margin-bottom: 2px; }
.dk-apps { margin-top: auto; margin-bottom: 0; height: 64px; }
.run {
  position: absolute;
  left: 0;
  top: 50%;
  width: 6px; height: 6px;
  margin-top: -3px;
  border-radius: 50%;
  background: #e9541f;
}
.bagA { font: 700 24px "Liberation Sans", sans-serif; fill: #fff; text-anchor: middle; }
.amzA { font: 700 40px "Liberation Sans", sans-serif; fill: #222; text-anchor: middle; }
.vmm { font: italic 700 25px "Liberation Sans", sans-serif; fill: #8d8a8c; text-anchor: middle; letter-spacing: -1.500px; stroke: #4a4046; stroke-width: .5px; }
.vmm-v { fill: #7a3d55; }

/* Window */
.window { flex: 1; min-width: 0; display: flex; flex-direction: column; position: relative; }
.titlebar {
  height: 28px;
  flex: none;
  display: flex;
  align-items: center;
  justify-content: center;
  position: relative;
  background: linear-gradient(#3d3b37, #4e4c47);
}
.title { color: #dedcd7; font-size: 14.600px; font-weight: 600; }
.winbtns { position: absolute; right: 5px; top: 6px; display: flex; gap: 4px; }
.wb {
  width: 16px; height: 16px;
  border-radius: 50%;
  background: #6e6c67;
  display: flex;
  align-items: center;
  justify-content: center;
  color: #3a3834;
  font-size: 12px;
  line-height: 1;
}
.wb-min::before { content: ""; width: 8px; height: 2px; background: #37352f; }
.wb-max::before { content: ""; width: 8px; height: 7px; border: 1px solid #37352f; }
.wb-close { background: #e9673a; }

/* Tab strip */
.tabstrip {
  height: 34px;
  flex: none;
  display: flex;
  align-items: center;
  padding-left: 8px;
  background: #dee1e6;
}
.tabs { display: flex; align-items: center; }
.t {
  height: 18px;
  flex: none;
  display: flex;
  justify-content: center;
  align-items: center;
  border-right: 1px solid #b6b9be;
  overflow: hidden;
  padding-left: 1px;
}
.tabs-wide .t { width: 16px; }
.tabs-narrow .t { width: 15px; }
.f {
  width: 12px;
  height: 16px;
  display: flex;
  align-items: center;
  justify-content: center;
  overflow: hidden;
  flex: none;
  font-family: "Liberation Sans", sans-serif;
  font-weight: 700;
}
svg.f { display: block; }
.w { background: #fff; }
.or { color: #f48024; }
.pu { color: #6b2c7e; }
.gr { color: #73a839; }
.ask { background: #e25a10; color: #fff; font-size: 7.500px; border-radius: 3px; letter-spacing: -.3px; }
.rg { background: #4bb5a6; color: #fff; font: 400 13px "Liberation Serif", serif; }
.mk { background: #000; color: #fff; font: 700 12px "Liberation Serif", serif; }
.wk { background: #fff; color: #111; font: 400 11px "Liberation Serif", serif; }
.php { background: #7a86b8; color: #111; font-size: 7px; font-weight: 400; letter-spacing: -.2px; }
.bt { background: #1f6f8f; color: #fff; font-size: 13px; }
.cf { background: #2f6a8f; color: #fff; font-size: 8px; }
.yg { background: #2f9e6e; color: #fff; font: 700 14px "Liberation Serif", serif; }
.zr { background: #d91616; color: #fff; font-size: 13px; }
.tk { background: #000; color: #fff; font: 700 13px "Liberation Serif", serif; }
.qr { color: #b83218; font: 700 15px "Liberation Serif", serif; }
.hb { color: #6e4a1e; font: 700 16px "Liberation Serif", serif; }
.zb { background: #1f86c8; color: #fff; font-size: 13px; }

.tab-active {
  width: 31px;
  height: 34px;
  flex: none;
  border-radius: 8px 8px 0 0;
  background: #fff;
  display: flex;
  align-items: center;
  justify-content: center;
  position: relative;
}
.tab-active svg { width: 11px; height: 11px; }
.tab-active::before, .tab-active::after {
  content: "";
  position: absolute;
  bottom: 0;
  width: 8px;
  height: 8px;
}
.tab-active::before { left: -8px; background: radial-gradient(circle at 0 0, transparent 8px, #fff 8.500px); }
.tab-active::after { right: -8px; background: radial-gradient(circle at 100% 0, transparent 8px, #fff 8.500px); }
.newtab { width: 13px; height: 13px; margin-left: 17px; }

/* Toolbar */
.toolbar {
  height: 32px;
  flex: none;
  display: flex;
  align-items: center;
  padding: 2px 0 0 5px;
  background: #fff;
}
.nav { width: 32.300px; display: flex; justify-content: center; flex: none; }
.nav svg { width: 16px; height: 16px; }
.omni {
  width: 1397px;
  height: 28px;
  margin-left: 7px;
  flex: none;
  display: flex;
  align-items: center;
  padding-left: 11px;
  border-radius: 14px;
  background: #f1f3f4;
  font-size: 14px;
}
.lock { width: 10px; height: 12px; flex: none; }
.url {
  margin-left: 12px;
  white-space: nowrap;
  color: #5f6b7a;
  font-family: "Noto Sans", sans-serif;
  letter-spacing: -.175px;
}
.host { color: #202124; }
.omni-tr {
  margin-left: auto;
  width: 33px;
  height: 28px;
  border-radius: 14px;
  background: #bdbdbd;
  display: flex;
  align-items: center;
  justify-content: center;
}
.omni-tr svg { width: 16px; height: 16px; }
.star { width: 17px; height: 17px; margin: 0 7px 0 8px; flex: none; }
.exts { display: flex; margin-left: 8px; }
.ext { width: 32px; display: flex; justify-content: center; flex: none; }
.ext svg { width: 18px; height: 18px; }
.abp { font: 700 6.500px "Liberation Sans", sans-serif; fill: #fff; text-anchor: middle; }
.tool-sep { width: 1px; height: 20px; margin-left: 6px; background: #d0d3d6; }
.avatar {
  width: 24px; height: 24px;
  margin-left: 11px;
  border-radius: 50%;
  display: flex;
  align-items: center;
  justify-content: center;
  background: linear-gradient(#f08a24 0 33%, #eef1ee 33% 67%, #3f9a3c 67%);
}
.chakra { width: 10px; height: 10px; border-radius: 50%; border: 1.500px solid #3b5b8f; }
.kebab { width: 4px; height: 14px; margin-left: 18px; }

/* Bookmarks */
.bookmarks {
  height: 38px;
  flex: none;
  display: flex;
  align-items: center;
  padding-left: 15px;
  padding-bottom: 1px;
  background: #fff;
  border-bottom: 1px solid #dadce0;
  font-size: 14.600px;
  color: #3c4043;
}
.bm { display: flex; align-items: center; gap: 9px; white-space: nowrap; flex: none; }
.folder { width: 14px; height: 12px; flex: none; }
.bm-globe { width: 15px; height: 15px; }
.film { width: 13px; height: 15px; }
.bm-lang { width: 111px; }
.bm-emp { width: 89px; gap: 8px; }
.bm-tam { width: 154px; }
.bm-and { width: 131px; }
.bm-ebuy { width: 80px; }
.bm-bull { width: 104px; }
.bm-ta { width: 53px; }
.bm-mc { width: 154px; }
.bm-ms { width: 154px; }
.bm-m2 { width: 77px; }
.bm-ato { width: 419px; }
.bm-india { width: 124px; }
.bm-more { width: 12px; color: #5f6368; font-size: 15px; line-height: 1; }
.bm-sep { width: 1px; height: 20px; margin-left: 7px; background: #d0d3d6; }
.bm-other { margin-left: 9px; }

/* Page */
.viewport { flex: 1; min-height: 0; display: flex; background: #f8f8f8; }
.page {
  flex: 1;
  min-width: 0;
  display: flex;
  flex-direction: column;
  align-items: center;
  padding-top: 169px;
  font-family: "Liberation Sans", Arial, sans-serif;
}
.time { font-size: 30px; line-height: 34px; color: #666; }
.heading { margin: 157px 0 30px; font-size: 30px; line-height: 36px; font-weight: 400; color: #000; }
.field {
  width: 519px;
  height: 54px;
  display: flex;
  align-items: center;
  padding-left: 22px;
  border: 3px solid #cfcfcf;
  border-radius: 27px;
  background: #eee;
  font-size: 24px;
  color: #111;
}
.typed { text-decoration: underline wavy #f01015 1px; text-underline-offset: 3px; }
.textcaret { width: 1px; height: 28px; background: #000; }
.row-opt {
  width: 100%;
  margin-top: 12px;
  display: grid;
  grid-template-columns: 1fr 519px 1fr;
  align-items: center;
  column-gap: 12px;
}
.row-opt .field { grid-column: 2; }
.optional { font-size: 18px; color: #777; }
.submit {
  width: 519px;
  height: 54px;
  margin-top: 42px;
  border: 0;
  border-radius: 27px;
  background: #279fdb;
  color: #fff;
  font: 24px "Liberation Sans", Arial, sans-serif;
}
.account { margin: 41px 0 0; font-size: 21px; line-height: 24px; color: #111; }
.signin { color: #279fdb; }
.more { margin: 49px 0 0; font-size: 18px; line-height: 22px; color: #666; }
.socials { margin-top: 27px; display: flex; gap: 36px; }
.social {
  width: 72px;
  height: 72px;
  border: 2px solid #e6e6e6;
  border-radius: 50%;
  background: #fff;
  display: flex;
  align-items: center;
  justify-content: center;
}
.social svg { width: 30px; height: 30px; }

/* Scrollbar */
.scrollbar {
  width: 15px;
  flex: none;
  display: flex;
  flex-direction: column;
  align-items: center;
  background: #f1f1f1;
}
.sb-up, .sb-down { width: 0; height: 0; border-left: 4px solid transparent; border-right: 4px solid transparent; }
.sb-up { margin-top: 5px; border-bottom: 5px solid #505050; }
.sb-thumb { width: 100%; flex: 1; margin: 6px 0 38px; background: #c1c1c1; }
.sb-down { margin-bottom: 5px; border-top: 5px solid #505050; }

/* Translate bubble */
.bubble {
  position: absolute;
  left: 1168px;
  top: 95px;
  width: 371px;
  height: 47px;
  display: flex;
  align-items: stretch;
  padding-left: 48px;
  background: #fff;
  border-radius: 2px;
  box-shadow: 0 1px 4px rgba(0, 0, 0, .5);
  font-size: 13.500px;
  font-weight: 600;
}
.bb-logo {
  position: absolute;
  left: 16px;
  top: 13px;
  width: 22px;
  height: 22px;
  border-radius: 50%;
  overflow: hidden;
  display: flex;
  background: linear-gradient(90deg, #4285f4 50%, #dcdcdc 50%);
  font-family: "Liberation Sans", "Noto Sans CJK SC", sans-serif;
  font-size: 10px;
  line-height: 22px;
}
.bb-g { width: 13px; color: #fff; text-align: right; }
.bb-wen { color: #777; font-size: 8px; font-weight: 400; }
.bb-tab {
  width: 95px;
  display: flex;
  align-items: center;
  justify-content: center;
  padding-top: 6px;
  border-bottom: 1px solid #d5d8dc;
  margin-bottom: 8px;
  color: #5f6368;
}
.bb-on { width: 91px; color: #1a73e8; border-bottom: 2px solid #1a73e8; }
.bb-kebab { position: absolute; left: 314px; top: 17px; width: 4px; height: 13px; }
.bb-x { position: absolute; left: 342px; top: 18px; width: 11px; height: 11px; }
```
